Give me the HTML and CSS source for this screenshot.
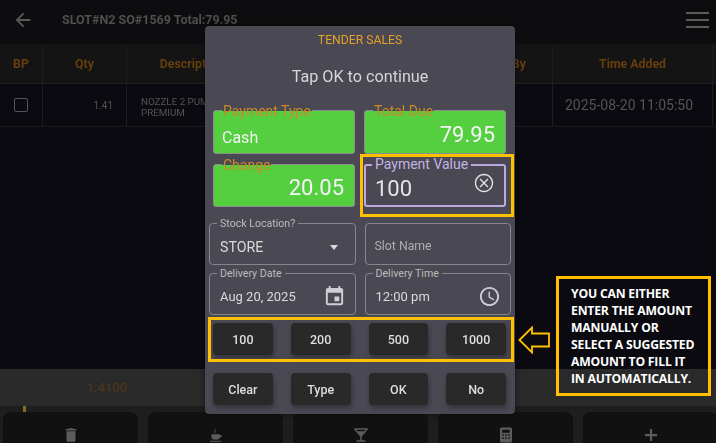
FILE: index.html
```html
<!DOCTYPE html>
<html lang="en">
<head>
  <meta charset="UTF-8" />
  <meta name="viewport" content="width=device-width, initial-scale=1.0"/>
  <title>Tender Sales</title>
  <link rel="stylesheet" href="styles.css">
</head>
<body>
  <div class="screen">
    <div class="app">
      <div class="topbar">
        <svg class="back" viewBox="0 0 24 24"><path d="M20 11H7.830l5.590-5.590L12 4l-8 8 8 8 1.410-1.410L7.830 13H20v-2z"/></svg>
        <span class="topbar-title">SLOT#N2 SO#1569 Total:79.95</span>
        <div class="burger"><span></span><span></span><span></span></div>
      </div>

      <div class="table-row table-head">
        <div>BP</div>
        <div>Qty</div>
        <div>Description</div>
        <div></div>
        <div>Added By</div>
        <div>Time Added</div>
      </div>
      <div class="table-row table-body">
        <div><span class="checkbox"></span></div>
        <div class="qty">1.41</div>
        <div class="desc">NOZZLE 2 PUMP<br>PREMIUM</div>
        <div></div>
        <div></div>
        <div class="time">2025-08-20 11:05:50</div>
      </div>

      <div class="spacer"></div>

      <div class="band"><span>1.4100</span></div>
      <div class="bottom-bar">
        <i class="tick"></i>
        <div class="bar-btn">
          <svg viewBox="0 0 24 24"><path d="M6 19c0 1.100.9 2 2 2h8c1.100 0 2-.9 2-2V7H6v12zM19 4h-3.500l-1-1h-5l-1 1H5v2h14V4z"/></svg>
        </div>
        <div class="bar-btn">
          <svg viewBox="0 0 24 24"><path d="M6 11h11v4c0 2-1.500 3-3 3H9c-1.500 0-3-1-3-3v-4zm11 1h1.500c1.500 0 1.500 3 0 3H17v-3zM4 19.500h15V21H4v-1.500zM11 3c2 2-1 3 .5 6H10C8.500 7 12 5.500 11 3z"/></svg>
        </div>
        <div class="bar-btn">
          <svg viewBox="0 0 24 24"><path d="M21 5V3H3v2l8 9v5H6v2h12v-2h-5v-5l8-9zM7.430 7L5.660 5h12.690l-1.780 2H7.430z"/></svg>
        </div>
        <div class="bar-btn">
          <svg viewBox="0 0 24 24"><path d="M6 2h12c1.100 0 2 .9 2 2v16c0 1.100-.9 2-2 2H6c-1.100 0-2-.9-2-2V4c0-1.100.9-2 2-2zm1 3v4h10V5H7zm0 6v2h2v-2H7zm4 0v2h2v-2h-2zm4 0v2h2v-2h-2zm-8 4v2h2v-2H7zm4 0v2h2v-2h-2zm4 0v2h2v-2h-2z"/></svg>
        </div>
        <div class="bar-btn">
          <svg viewBox="0 0 24 24"><path d="M20 13.500h-6.500V20h-3v-6.500H4v-3h6.500V4h3v6.500H20v3z"/></svg>
        </div>
      </div>
    </div>

    <div class="dialog">
      <div class="dialog-title">TENDER SALES</div>
      <div class="dialog-msg">Tap OK to continue</div>

      <div class="pay-grid">
        <div class="green-field">
          <label>Payment Type</label>
          <span class="left">Cash</span>
        </div>
        <div class="green-field">
          <label>Total Due</label>
          <span class="right">79.95</span>
        </div>
        <div class="green-field">
          <label>Change</label>
          <span class="right">20.05</span>
        </div>
        <div class="value-field">
          <label>Payment Value</label>
          <span>100</span>
          <svg viewBox="0 0 24 24"><path d="M12 2C6.470 2 2 6.470 2 12s4.470 10 10 10 10-4.470 10-10S17.530 2 12 2zm0 18.500c-4.690 0-8.500-3.810-8.500-8.500S7.310 3.500 12 3.500s8.500 3.810 8.500 8.500-3.810 8.500-8.500 8.500zM15.800 7.200L12 11l-3.800-3.800-1 1L11 12l-3.800 3.800 1 1L12 13l3.800 3.800 1-1L13 12l3.800-3.800-1-1z"/></svg>
        </div>
      </div>

      <div class="form-grid">
        <div class="field">
          <label>Stock Location?</label>
          <span class="store">STORE</span>
          <i class="caret"></i>
        </div>
        <div class="field">
          <span class="placeholder">Slot Name</span>
        </div>
        <div class="field">
          <label>Delivery Date</label>
          <span>Aug 20, 2025</span>
          <svg viewBox="0 0 24 24"><path d="M19 3h-1V1h-2v2H8V1H6v2H5c-1.110 0-1.990.9-1.990 2L3 19c0 1.100.89 2 2 2h14c1.100 0 2-.9 2-2V5c0-1.100-.9-2-2-2zm0 16H5V8h14v11zM17 12h-5v5h5z"/></svg>
        </div>
        <div class="field">
          <label>Delivery Time</label>
          <span>12:00 pm</span>
          <svg viewBox="0 0 24 24"><path d="M11.990 2C6.470 2 2 6.480 2 12s4.470 10 9.990 10C17.520 22 22 17.520 22 12S17.520 2 11.990 2zM12 20c-4.420 0-8-3.580-8-8s3.580-8 8-8 8 3.580 8 8-3.580 8-8 8zm.5-13H11v6l5.250 3.150.75-1.230-4.500-2.670z"/></svg>
        </div>
      </div>

      <div class="btn-row suggest">
        <button>100</button>
        <button>200</button>
        <button>500</button>
        <button>1000</button>
      </div>
      <div class="btn-row actions">
        <button>Clear</button>
        <button>Type</button>
        <button>OK</button>
        <button>No</button>
      </div>
    </div>

    <!-- annotations on top of the screenshot -->
    <div class="mark mark-value"></div>
    <div class="mark mark-suggest"></div>
    <svg class="mark-arrow" viewBox="0 0 32 28"><path d="M1.500 14 L14 1.500 V7.500 H31 V20.500 H14 V26.500 Z"/></svg>
    <div class="note">YOU CAN EITHER<br>ENTER THE AMOUNT<br>MANUALLY OR<br>SELECT A SUGGESTED<br>AMOUNT TO FILL IT<br>IN AUTOMATICALLY.</div>
  </div>
</body>
</html>
```

FILE: styles.css
```css
body {
  margin: 0;
  font-family: Roboto, "Liberation Sans", sans-serif;
  background: #0a0a10;
}
.screen {
  position: relative;
  width: 716px;
  height: 443px;
  overflow: hidden;
}
.app {
  display: flex;
  flex-direction: column;
  height: 443px;
  filter: blur(0.35px);
}

/* top bar */
.topbar {
  display: flex;
  align-items: center;
  height: 44px;
  padding: 0 7px 5px 12px;
  box-sizing: border-box;
  background: #0d0d0f;
}
.back {
  width: 22px;
  height: 22px;
  fill: #5a5a5a;
}
.topbar-title {
  margin-left: 28px;
  font-size: 12.500px;
  font-weight: 700;
  color: #4f4f4f;
}
.burger {
  margin-left: auto;
  width: 23px;
  display: flex;
  flex-direction: column;
  gap: 5px;
}
.burger span {
  height: 2px;
  background: #5c5c5c;
}

/* table behind the dialog */
.table-row {
  display: grid;
  grid-template-columns: 43px 84px 130px 190px 106px 160px 3px;
}
.table-row > div {
  display: flex;
  align-items: center;
  justify-content: center;
  border-right: 1px solid #1d1d1f;
  box-sizing: border-box;
}
.table-head {
  height: 40px;
  padding-top: 1px;
  background: #141414;
  border-bottom: 1px solid #202020;
  box-sizing: border-box;
  font-size: 12.300px;
  font-weight: 700;
  color: #663f0c;
}
.table-body {
  height: 43px;
  border-bottom: 1px solid #1a1a1c;
  box-sizing: border-box;
  color: #545456;
}
.checkbox {
  width: 12px;
  height: 12px;
  border: 1.500px solid #56565a;
  border-radius: 2px;
}
.table-row > .qty {
  justify-content: flex-end;
  padding-right: 13px;
  font-size: 10px;
}
.table-row > .desc {
  justify-content: flex-start;
  padding: 4px 0 0 14px;
  font-size: 9.800px;
  line-height: 11px;
}
.table-row > .time {
  padding-right: 7px;
  font-size: 14px;
}
.spacer {
  flex: 1;
}

/* bottom */
.band {
  height: 37px;
  background: #2a2a2a;
  display: flex;
  align-items: center;
  font-size: 13px;
  color: #553a14;
}
.band span {
  margin-left: 87px;
}
.bottom-bar {
  position: relative;
  display: grid;
  grid-template-columns: repeat(5, 135px);
  gap: 10px;
  height: 37px;
  padding: 6px 0 0 3px;
  box-sizing: border-box;
  background: #1e1e1e;
}
.tick {
  position: absolute;
  left: 23px;
  top: 0;
  width: 3px;
  height: 6px;
  background: #7d6f20;
}
.bar-btn {
  height: 40px;
  background: #111;
  border-radius: 8px 8px 0 0;
  display: flex;
  justify-content: center;
  padding-top: 14px;
  box-sizing: border-box;
}
.bar-btn svg {
  width: 18px;
  height: 18px;
  fill: #5c5c5c;
}

/* dialog */
.dialog {
  position: absolute;
  left: 205px;
  top: 26px;
  width: 310px;
  height: 388px;
  background: #4a4852;
  border-radius: 4px;
  box-shadow: 0 0 6px rgba(0,0,0,0.5);
  filter: blur(0.35px);
}
.dialog-title {
  height: 28px;
  line-height: 28px;
  text-align: center;
  font-size: 12.200px;
  color: #e2a12c;
}
.dialog-msg {
  height: 28px;
  line-height: 28px;
  margin-top: 9px;
  text-align: center;
  font-size: 16.200px;
  color: #d6d6d6;
}
.pay-grid {
  display: grid;
  grid-template-columns: 1fr 1fr;
  grid-auto-rows: 43.500px;
  gap: 10px 9px;
  margin: 19px 9px 0 8px;
}
.green-field {
  position: relative;
  display: flex;
  align-items: flex-end;
  padding: 0 9px 5px 8px;
  background: #55cf40;
  border: 1px solid #8b8f8b;
  border-radius: 3px;
  box-sizing: border-box;
  color: #f4f4f4;
  font-size: 16px;
}
.green-field label {
  position: absolute;
  left: 8px;
  top: -8px;
  padding: 0 1px;
  height: 16px;
  line-height: 16px;
  font-size: 14px;
  color: #c98b27;
  background: linear-gradient(#4a4852 8px, transparent 8px);
}
.green-field .right {
  margin-left: auto;
  margin-right: 1px;
  font-size: 22px;
  line-height: 26px;
}
.green-field .left {
  padding-bottom: 1px;
}
.value-field {
  position: relative;
  display: flex;
  align-items: center;
  padding: 6px 9px 0 9px;
  border: 2px solid #bcaadf;
  border-radius: 3px;
  box-sizing: border-box;
  color: #e4e4e4;
  font-size: 22px;
}
.value-field label {
  position: absolute;
  left: 6px;
  top: -10px;
  padding: 0 3px;
  background: #4a4852;
  font-size: 14px;
  line-height: 16px;
  color: #c3b3e4;
}
.value-field svg {
  width: 22px;
  height: 22px;
  margin-left: auto;
  margin-top: -10px;
  fill: #e2e2e2;
}

.form-grid {
  display: grid;
  grid-template-columns: 1fr 1fr;
  grid-auto-rows: 42px;
  gap: 7.500px 9px;
  margin: 16px 4px 0;
}
.field {
  position: relative;
  display: flex;
  align-items: center;
  padding: 5px 10px 0;
  border: 1px solid #86858c;
  border-radius: 4px;
  box-sizing: border-box;
  font-size: 13px;
  color: #dadada;
}
.field label {
  position: absolute;
  left: 7px;
  top: -7px;
  padding: 0 3px;
  background: #4a4852;
  font-size: 10.600px;
  line-height: 13px;
  color: #bcbcbc;
}
.field .store {
  font-size: 14.200px;
  padding-top: 1px;
}
.field .placeholder {
  font-size: 12.300px;
  color: #adadad;
  padding-bottom: 1px;
  margin-left: -1px;
}
.field svg {
  width: 23px;
  height: 23px;
  margin-left: auto;
  margin-right: -1px;
  fill: #cfcdd6;
}
.caret {
  margin-left: auto;
  margin-right: 7px;
  margin-top: 1px;
  border: 4px solid transparent;
  border-top: 5px solid #d8d8d8;
  border-bottom: 0;
}

.btn-row {
  display: grid;
  grid-template-columns: repeat(4, 1fr);
  gap: 18px;
  margin: 0 9px 0 8px;
}
.suggest {
  margin-top: 8.500px;
}
.actions {
  margin-top: 18px;
}
button {
  height: 32px;
  padding: 0;
  border: 0;
  border-radius: 4px;
  background: #292929;
  box-shadow: 1px 3px 5px rgba(0,0,0,0.3);
  font-family: inherit;
  font-size: 12.500px;
  font-weight: 500;
  color: #dedede;
}

/* annotations */
.mark {
  position: absolute;
  border: 3px solid #ffc000;
  box-sizing: border-box;
}
.mark-value {
  left: 360px;
  top: 154px;
  width: 154px;
  height: 63px;
}
.mark-suggest {
  left: 208px;
  top: 317px;
  width: 306px;
  height: 45px;
}
.mark-arrow {
  position: absolute;
  left: 518px;
  top: 326px;
  width: 32px;
  height: 28px;
  fill: none;
  stroke: #ffc000;
  stroke-width: 1.800px;
}
.note {
  position: absolute;
  left: 556px;
  top: 276px;
  width: 155px;
  height: 120px;
  padding: 6px 0 0 12px;
  border: 3px solid #ffc000;
  box-sizing: border-box;
  font-family: "Open Sans", sans-serif;
  font-size: 12.200px;
  font-weight: 700;
  line-height: 17px;
  letter-spacing: -0.2px;
  white-space: nowrap;
  color: #fff;
}
```
